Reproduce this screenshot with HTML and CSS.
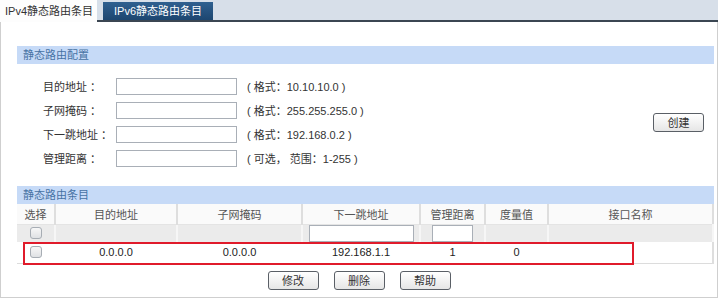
FILE: index.html
```html
<!DOCTYPE html>
<html lang="zh-CN">
<head>
    <meta charset="UTF-8">
    <title>静态路由</title>
    <link rel="stylesheet" href="styles.css">
</head>
<body>
    <div class="page">
        <div class="tabs">
            <div class="tab tab-on">IPv4静态路由条目</div>
            <div class="tab-rest">
                <div class="tab tab-off">IPv6静态路由条目</div>
            </div>
        </div>

        <div class="panel">
            <div class="block-title">静态路由配置</div>
            <div class="config">
                <div class="fields">
                    <label>目的地址 ：</label>
                    <input type="text">
                    <span class="hint">( 格式：10.10.10.0 )</span>

                    <label>子网掩码 ：</label>
                    <input type="text">
                    <span class="hint">( 格式：255.255.255.0 )</span>

                    <label>下一跳地址 ：</label>
                    <input type="text">
                    <span class="hint">( 格式：192.168.0.2 )</span>

                    <label>管理距离 ：</label>
                    <input type="text">
                    <span class="hint">( 可选， 范围：1-255 )</span>
                </div>
                <button class="btn">创建</button>
            </div>

            <div class="block-title">静态路由条目</div>
            <div class="table-wrap">
                <table class="routes">
                    <colgroup>
                        <col class="c-sel">
                        <col class="c-dst">
                        <col class="c-mask">
                        <col class="c-hop">
                        <col class="c-dist">
                        <col class="c-metric">
                        <col>
                    </colgroup>
                    <thead>
                        <tr>
                            <th>选择</th>
                            <th>目的地址</th>
                            <th>子网掩码</th>
                            <th>下一跳地址</th>
                            <th>管理距离</th>
                            <th>度量值</th>
                            <th>接口名称</th>
                        </tr>
                    </thead>
                    <tbody>
                        <tr class="filter">
                            <td><input type="checkbox" class="check"></td>
                            <td></td>
                            <td></td>
                            <td><input type="text" class="f-hop"></td>
                            <td><input type="text" class="f-dist"></td>
                            <td></td>
                            <td></td>
                        </tr>
                        <tr class="entry">
                            <td><input type="checkbox" class="check"></td>
                            <td>0.0.0.0</td>
                            <td>0.0.0.0</td>
                            <td>192.168.1.1</td>
                            <td>1</td>
                            <td>0</td>
                            <td></td>
                        </tr>
                    </tbody>
                </table>
                <!-- highlight around the default route -->
                <div class="mark"></div>
            </div>

            <div class="actions">
                <button class="btn">修改</button>
                <button class="btn">删除</button>
                <button class="btn">帮助</button>
            </div>
        </div>
    </div>
</body>
</html>
```

FILE: styles.css
```css
* {
    margin: 0;
    padding: 0;
    box-sizing: border-box;
}

body {
    font-family: "Liberation Sans", "Noto Sans CJK SC", sans-serif;
    font-size: 11px;
    color: #333;
    background: #fff;
}

.page {
    width: 718px;
    height: 298px;
    display: flex;
    flex-direction: column;
}

/* tabs */
.tabs {
    display: flex;
    height: 22px;
    background: #d7dfe9;
}

.tab {
    font-size: 11px;
    white-space: nowrap;
}

.tab-on {
    background: #fdfdfd;
    color: #333;
    padding: 0 5px;
    line-height: 22px;
    width: 97px;
}

.tab-rest {
    flex: 1;
    display: flex;
    align-items: flex-end;
    border-bottom: 2px solid #3b4652;
}

.tab-off {
    margin-left: 6px;
    width: 110px;
    height: 18px;
    line-height: 18px;
    text-align: center;
    color: #fff;
    background: linear-gradient(#2f6090, #1d4670);
}

/* panel */
.panel {
    flex: 1;
    border: 1px solid #cfcfcf;
    border-top: none;
    padding: 24px 3px 0 16px;
}

.block-title {
    height: 18px;
    line-height: 18px;
    padding-left: 6px;
    background: #c6daf7;
    color: #4672a4;
}

.config {
    display: flex;
    align-items: center;
    justify-content: space-between;
    padding: 10px 10px 16px 0;
}

.fields {
    display: grid;
    grid-template-columns: 63px 121px auto;
    grid-auto-rows: 24px;
    align-items: center;
    column-gap: 10px;
    padding-left: 26px;
}

.fields label {
    white-space: nowrap;
}

.fields input {
    width: 121px;
    height: 17px;
    border: 1px solid #a9afb7;
    background: #fff;
}

.btn {
    width: 51px;
    height: 19px;
    font-family: inherit;
    font-size: 11px;
    color: #333;
    border: 1px solid #5a5f66;
    border-radius: 3px;
    background: linear-gradient(#ffffff, #e6e6e6);
}

/* table */
.table-wrap {
    position: relative;
}

.routes {
    width: 100%;
    border-collapse: collapse;
    table-layout: fixed;
    border-right: 2px solid #dedede;
}

.c-sel { width: 38px; }
.c-dst { width: 122px; }
.c-mask { width: 125px; }
.c-hop { width: 118px; }
.c-dist { width: 65px; }
.c-metric { width: 63px; }

.routes th {
    height: 20px;
    font-weight: normal;
    color: #555;
    background: #fafafa;
    border-right: 2px solid #dedede;
    border-bottom: 1px solid #e4e4e4;
}

.routes th:last-child {
    border-right: none;
}

.routes td {
    text-align: center;
    color: #222;
}

.filter td {
    height: 18px;
    background: #ebebeb;
    border-right: 2px solid #f6f6f6;
    vertical-align: bottom;
}

.filter td:first-child {
    vertical-align: middle;
}

.entry td {
    height: 21px;
    background: #fff;
    border-bottom: 1px solid #dcdcdc;
}

.check {
    appearance: none;
    display: block;
    margin: 0 auto;
    width: 12px;
    height: 12px;
    border: 1px solid #a7adb4;
    border-radius: 3px;
    background: linear-gradient(#f7f7f7, #dfe1e4);
}

.f-hop,
.f-dist {
    display: block;
    margin: 0 auto;
    height: 17px;
    border: 1px solid #a9afb7;
    background: #fff;
}

.f-hop {
    width: 105px;
}

.f-dist {
    width: 41px;
}

.mark {
    position: absolute;
    left: 6px;
    top: 38px;
    width: 611px;
    height: 23px;
    border: 2px solid #e01b2b;
}

.actions {
    display: flex;
    justify-content: center;
    gap: 15px;
    margin-top: 7px;
    padding-right: 13px;
}
```
